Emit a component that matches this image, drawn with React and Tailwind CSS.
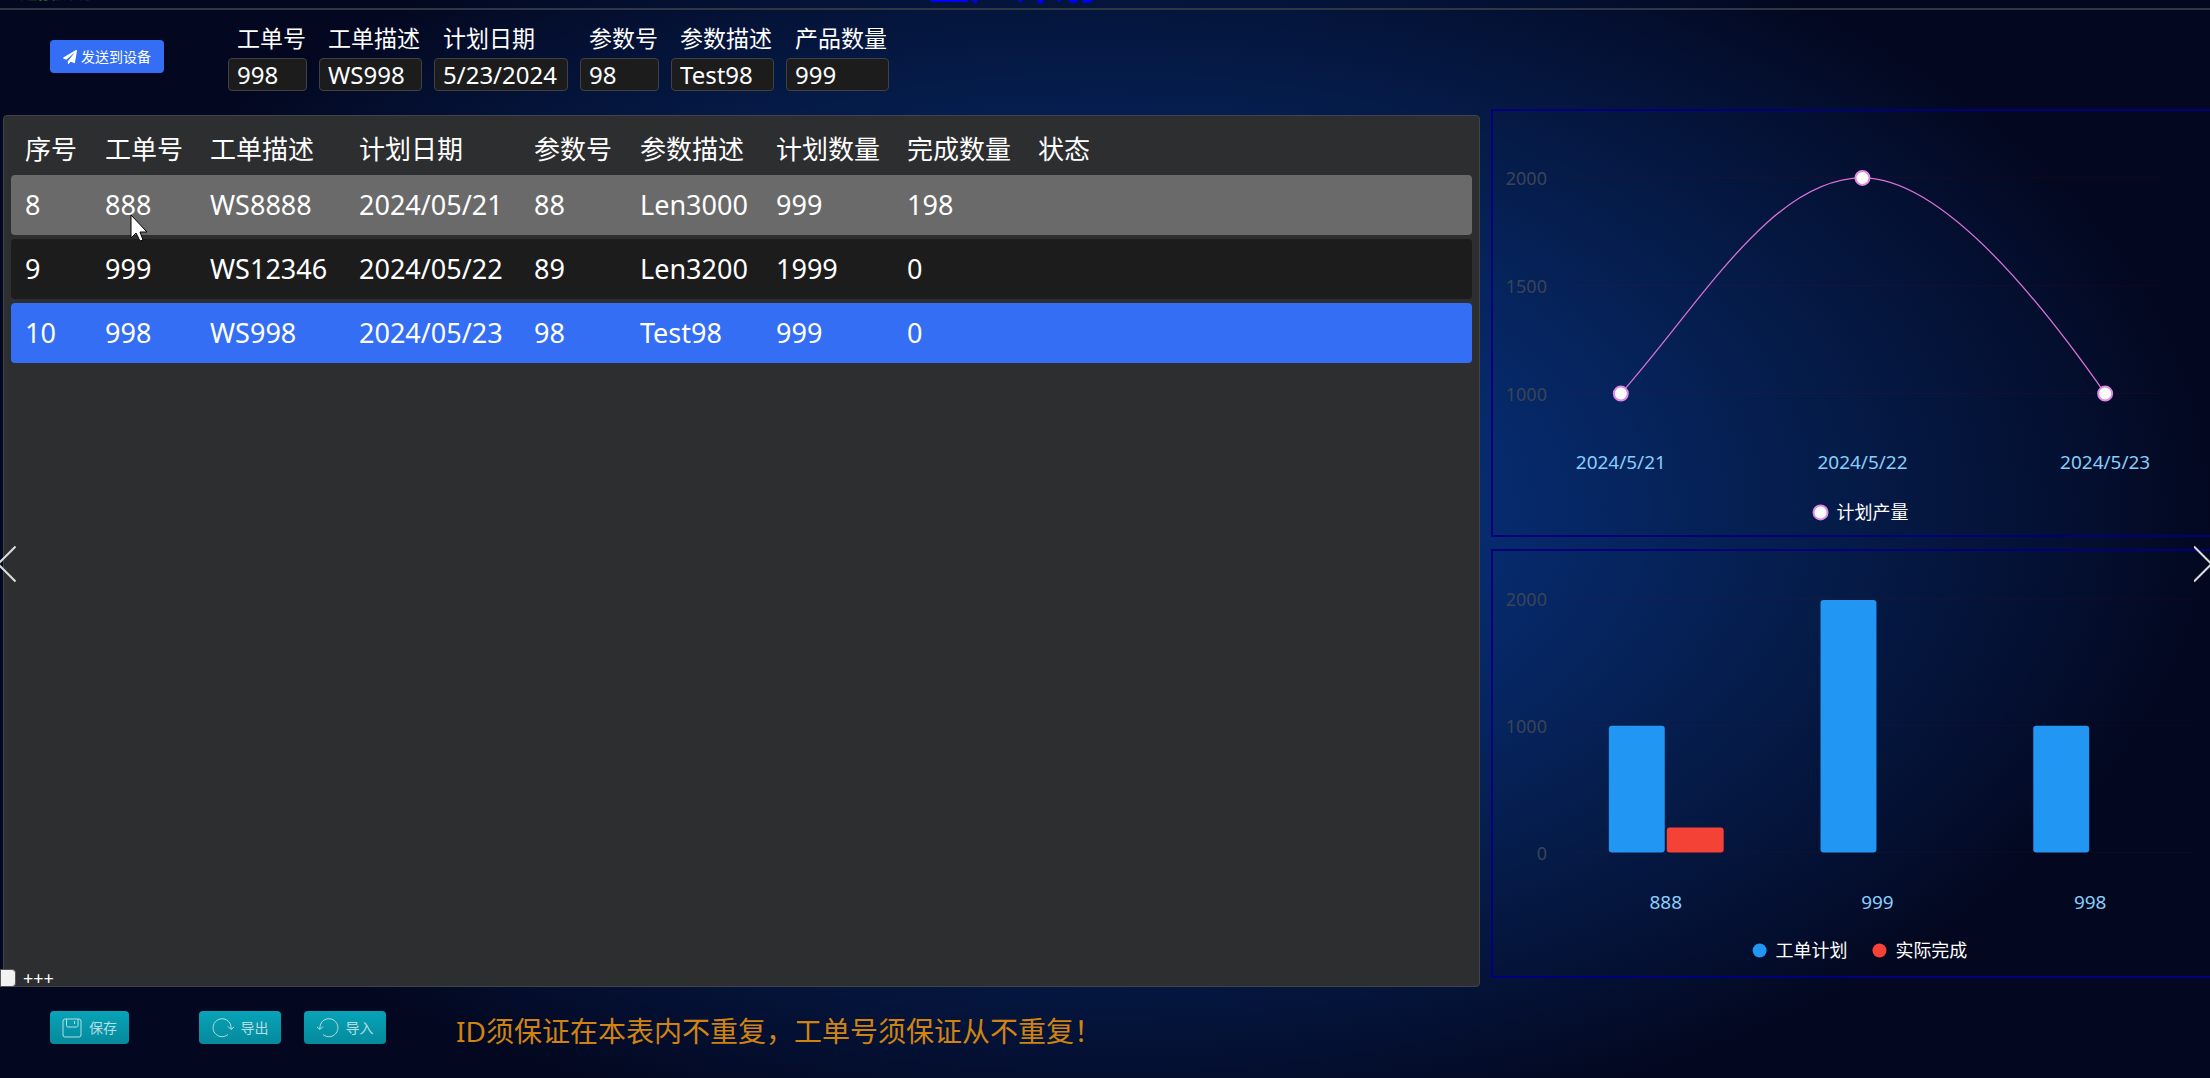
import { useState } from 'react';
import { FaPaperPlane } from 'react-icons/fa';

const FONT = "font-['Noto_Sans','Noto_Sans_CJK_SC',sans-serif]";

const FIELDS = [
  { id: 'order', label: '工单号', value: '998', width: 'w-[79px]' },
  { id: 'desc', label: '工单描述', value: 'WS998', width: 'w-[103px]' },
  { id: 'date', label: '计划日期', value: '5/23/2024', width: 'w-[134px]' },
  { id: 'param', label: '参数号', value: '98', width: 'w-[79px]' },
  { id: 'paramDesc', label: '参数描述', value: 'Test98', width: 'w-[103px]' },
  { id: 'count', label: '产品数量', value: '999', width: 'w-[103px]' },
];

const COLUMNS = [
  { title: '序号', width: 'w-20' },
  { title: '工单号', width: 'w-[105px]' },
  { title: '工单描述', width: 'w-[149px]' },
  { title: '计划日期', width: 'w-[175px]' },
  { title: '参数号', width: 'w-[106px]' },
  { title: '参数描述', width: 'w-[136px]' },
  { title: '计划数量', width: 'w-[131px]' },
  { title: '完成数量', width: 'w-[131px]' },
  { title: '状态', width: '' },
];

const ROWS = [
  ['8', '888', 'WS8888', '2024/05/21', '88', 'Len3000', '999', '198', ''],
  ['9', '999', 'WS12346', '2024/05/22', '89', 'Len3200', '1999', '0', ''],
  ['10', '998', 'WS998', '2024/05/23', '98', 'Test98', '999', '0', ''],
];

function TopBar() {
  return (
    <header className="flex h-[10px] items-end overflow-hidden border-b-2 border-[#2f3644] pl-5">
      <span className="w-[41.5%] pb-1 text-lg leading-6 text-[#1d6a1d]">连接成功</span>
      <h1 className="pb-px text-[42px] leading-[48px] font-bold whitespace-nowrap text-[#0000f5]">生产计划</h1>
    </header>
  );
}

function OrderForm() {
  return (
    <form className="flex h-[105px] items-start pl-[50px]" onSubmit={(e) => e.preventDefault()}>
      <button
        type="submit"
        className="mt-[30px] mr-16 flex h-[33px] w-[114px] items-center justify-center gap-1 rounded bg-[#336ef4] text-sm text-white"
      >
        <FaPaperPlane className="size-[14px]" />
        <span className="whitespace-nowrap">发送到设备</span>
      </button>
      <div className="mt-3 flex gap-3">
        {FIELDS.map((f) => (
          <div key={f.id} className="flex flex-col">
            <label htmlFor={f.id} className="h-9 pl-[9px] text-[23px] leading-8 whitespace-nowrap text-white">
              {f.label}
            </label>
            <input
              id={f.id}
              defaultValue={f.value}
              className={`${f.width} h-[33px] rounded border border-[#3f4145] bg-[#1c1c1c] px-2 text-2xl leading-7 text-white outline-none`}
            />
          </div>
        ))}
      </div>
    </form>
  );
}

function OrderTable() {
  const [selected, setSelected] = useState(2);
  const [hovered, setHovered] = useState(0);

  const rowColor = (i) => {
    if (i === selected) return 'bg-[#336ef4]';
    if (i === hovered) return 'bg-[#6a6a6a]';
    return 'bg-[#1c1c1c]';
  };

  return (
    <table className="w-full table-fixed border-separate border-spacing-x-0 border-spacing-y-1 text-left text-white">
      <thead className="text-[26px]">
        <tr className="h-[47px]">
          {COLUMNS.map((c) => (
            <th key={c.title} className={`${c.width} p-0 pt-1 pl-[14px] font-normal whitespace-nowrap`}>
              {c.title}
            </th>
          ))}
        </tr>
      </thead>
      <tbody className="text-[27px]">
        {ROWS.map((row, i) => (
          <tr
            key={row[0]}
            className="h-[60px]"
            onClick={() => setSelected(i)}
            onMouseEnter={() => setHovered(i)}
          >
            {row.map((cell, j) => (
              <td
                key={j}
                className={`${rowColor(i)} p-0 pl-[14px] whitespace-nowrap first:rounded-l last:rounded-r`}
              >
                {cell}
              </td>
            ))}
          </tr>
        ))}
      </tbody>
    </table>
  );
}

function LineChart() {
  const ticks = [
    { v: 2000, y: 67 },
    { v: 1500, y: 175 },
    { v: 1000, y: 283 },
  ];
  const points = [
    { label: '2024/5/21', x: 128, y: 283 },
    { label: '2024/5/22', x: 370, y: 67 },
    { label: '2024/5/23', x: 613, y: 283 },
  ];
  return (
    <svg viewBox="0 0 718 425" className={`block w-full ${FONT}`}>
      {ticks.map((t) => (
        <g key={t.v}>
          <line x1="76" x2="670" y1={t.y} y2={t.y} stroke="#ff0000" strokeOpacity="0.08" />
          <text x="54" y={t.y + 7} textAnchor="end" fontSize="18" fill="#3b4456">{t.v}</text>
        </g>
      ))}
      <path
        d="M128 283C210 190 280 67 370 67C450 67 548 190 613 283"
        fill="none"
        stroke="#da70d6"
        strokeWidth="1.3"
      />
      {points.map((p) => (
        <g key={p.label}>
          <circle cx={p.x} cy={p.y} r="7" fill="#fff" stroke="#e08ae6" strokeWidth="2" />
          <text x={p.x} y="359" textAnchor="middle" fontSize="19" fill="#87cefa">{p.label}</text>
        </g>
      ))}
      <circle cx="328" cy="402" r="7" fill="#fff" stroke="#e08ae6" strokeWidth="2" />
      <text x="344" y="409" fontSize="18" fill="#fff">计划产量</text>
    </svg>
  );
}

function BarChart() {
  const ticks = [
    { v: 2000, y: 48 },
    { v: 1000, y: 175 },
    { v: 0, y: 302 },
  ];
  const groups = [
    { label: '888', x: 173, plan: 127, done: 25 },
    { label: '999', x: 385, plan: 253, done: 0 },
    { label: '998', x: 598, plan: 127, done: 0 },
  ];
  return (
    <svg viewBox="0 0 718 425" className={`block w-full ${FONT}`}>
      {ticks.map((t) => (
        <g key={t.v}>
          <line x1="76" x2="702" y1={t.y} y2={t.y} stroke="#ff0000" strokeOpacity="0.07" />
          <text x="54" y={t.y + 7} textAnchor="end" fontSize="18" fill="#3b4456">{t.v}</text>
        </g>
      ))}
      {groups.map((g) => (
        <g key={g.label}>
          <rect x={g.x - 57} y={302 - g.plan} width="56" height={g.plan} rx="3" fill="#2196f3" />
          {g.done > 0 && (
            <rect x={g.x + 1} y={302 - g.done} width="57" height={g.done} rx="3" fill="#f44336" />
          )}
          <text x={g.x} y="359" textAnchor="middle" fontSize="19" fill="#87cefa">{g.label}</text>
        </g>
      ))}
      <circle cx="267" cy="400" r="7" fill="#2196f3" />
      <text x="283" y="407" fontSize="18" fill="#fff">工单计划</text>
      <circle cx="387" cy="400" r="7" fill="#f44336" />
      <text x="403" y="407" fontSize="18" fill="#fff">实际完成</text>
    </svg>
  );
}

function SaveIcon() {
  return (
    <svg viewBox="0 0 20 20" className="size-5" fill="none" stroke="currentColor">
      <rect x="1" y="1" width="18" height="18" rx="2" />
      <path d="M4.500 1v6.500a1.500 1.500 0 0 0 1.500 1.500h8.500a1.500 1.500 0 0 0 1.500-1.500V1M12.500 3v3" />
    </svg>
  );
}

function ExportIcon() {
  return (
    <svg viewBox="0 0 22 20" className="h-5 w-[22px]" fill="none" stroke="currentColor">
      <path d="M16 16.500A9 9 0 1 1 19 11M16 8.500l3 3 3-2.500" />
    </svg>
  );
}

function ImportIcon() {
  return (
    <svg viewBox="0 0 22 20" className="h-5 w-[22px]" fill="none" stroke="currentColor">
      <path d="M6 16.500A9 9 0 1 0 3 11M0 9l3 2.500 3-3" />
    </svg>
  );
}

function ToolButton({ icon, children, className }) {
  return (
    <button
      type="button"
      className={`${className} flex h-[33px] items-center justify-center gap-[7px] rounded bg-gradient-to-b from-[#08a3b8] to-[#058a9c] text-sm text-[#b5dde2]`}
    >
      {icon}
      {children}
    </button>
  );
}

export default function App() {
  return (
    <div
      className={`relative flex min-h-screen flex-col overflow-hidden bg-[#030820] bg-[radial-gradient(ellipse_50%_60%_at_50%_47%,#0a3c8c_0%,#062a6c_36%,#051c4a_65%,#040f30_88%,#030820_100%)] ${FONT}`}
    >
      <TopBar />
      <OrderForm />

      <main className="grid flex-1 grid-cols-[1477fr_719fr] gap-[11px] pl-[3px]">
        <section className="flex min-w-0 flex-col justify-between rounded border border-[#404348] bg-[#2d2e30] px-[7px] pt-1">
          <OrderTable />
          <div className="pl-3 text-lg leading-4 text-white">+++</div>
        </section>
        <section className="-mt-[6px] flex min-w-0 flex-col gap-3">
          <div className="border-y-2 border-l-2 border-[#00007c]"><LineChart /></div>
          <div className="border-y-2 border-l-2 border-[#00007c]"><BarChart /></div>
        </section>
      </main>

      <footer className="flex h-[91px] items-start pt-6 pl-[50px]">
        <ToolButton icon={<SaveIcon />} className="mr-[70px] w-[79px]">保存</ToolButton>
        <ToolButton icon={<ExportIcon />} className="mr-[23px] w-[82px]">导出</ToolButton>
        <ToolButton icon={<ImportIcon />} className="w-[82px]">导入</ToolButton>
        <p className="ml-[70px] text-[28px] leading-10 text-[#cf8412]">ID须保证在本表内不重复，工单号须保证从不重复！</p>
      </footer>

      {/* page arrows and the corner handle float over the panels */}
      <button type="button" aria-label="上一页" className="absolute top-1/2 left-0 h-12 w-4 text-[#dcdcdc]">
        <svg viewBox="0 0 16 48" className="h-12 w-4" fill="none" stroke="currentColor" strokeWidth="2">
          <path d="M15.500 7.500-2 25 15.500 42.500" />
        </svg>
      </button>
      <button type="button" aria-label="下一页" className="absolute top-1/2 right-0 h-12 w-4 text-[#dcdcdc]">
        <svg viewBox="0 0 16 48" className="h-12 w-4" fill="none" stroke="currentColor" strokeWidth="2">
          <path d="M0 7.500 17.500 25 0 42.500" />
        </svg>
      </button>
      <div className="absolute bottom-[91px] left-0 h-[18px] w-4 rounded-r-sm border border-[#555] bg-[#f2f2f2]" />
      <svg viewBox="0 0 18 28" className="absolute top-[214px] left-[130px] h-7 w-[18px]">
        <path d="M1 1v23l5-5 4 8 3-1-3-8h7z" fill="#fff" stroke="#000" />
      </svg>
    </div>
  );
}
